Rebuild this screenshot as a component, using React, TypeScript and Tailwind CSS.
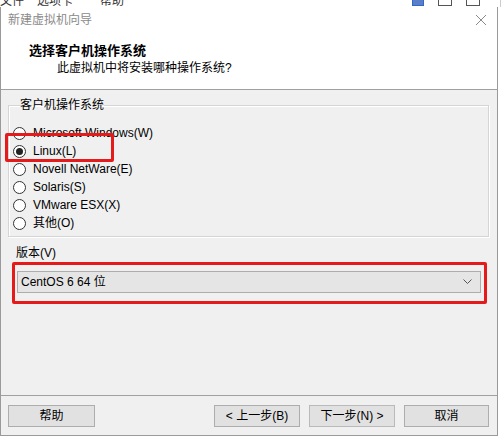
import React from "react";

const font = { fontFamily: '"Liberation Sans", "Noto Sans CJK SC", sans-serif' };

function Radio({ label, checked }: { label: string; checked?: boolean }) {
  return (
    <div className="flex items-center h-[18px]">
      <div className="w-[13px] h-[13px] rounded-full border border-[#333] bg-white flex items-center justify-center">
        {checked && <div className="w-[7px] h-[7px] rounded-full bg-[#222]" />}
      </div>
      <span className="ml-[7px] text-[12px] text-black leading-none">{label}</span>
    </div>
  );
}

function Btn({ label, w, className = "" }: { label: string; w: string; className?: string }) {
  return (
    <div
      className={`${w} h-[22px] bg-[#e1e1e1] border border-[#adadad] flex items-center justify-center text-[12px] text-black ${className}`}
    >
      {label}
    </div>
  );
}

export default function App() {
  return (
    <div className="w-[501px] h-[437px] bg-white overflow-hidden relative" style={font}>
      {/* background app strip */}
      <div className="h-[7px] overflow-hidden bg-white flex text-[12px] text-[#333] border-r border-[#ccc]">
        <div className="-mt-[8px] flex pl-[0px]">
          <span className="w-[37px]">文件</span>
          <span className="w-[63px]">选项卡</span>
          <span>帮助</span>
        </div>
        <div className="-mt-[8px] ml-auto mr-[20px] flex gap-[14px] items-start">
          <div className="w-[12px] h-[14px] border border-[#3366cc] bg-[#5b7fc7]" />
          <div className="w-[14px] h-[14px] border border-[#555]" />
          <div className="w-[14px] h-[14px] border border-[#555]" />
        </div>
      </div>

      {/* dialog */}
      <div className="w-[498px] h-[429px] border border-[#9a9a9a] border-t-0 flex flex-col bg-[#f0f0f0]">
        {/* title bar */}
        <div className="h-[28px] bg-white flex items-center pl-[7px] pr-[10px] shrink-0 pb-[3px]">
          <span className="text-[12px] text-[#8a8a8a]">新建虚拟机向导</span>
          <svg className="ml-auto" width="12" height="12" viewBox="0 0 12 12">
            <path d="M1 1L11 11M11 1L1 11" stroke="#8a8a8a" strokeWidth="1" />
          </svg>
        </div>
        {/* header */}
        <div className="h-[55px] bg-white border-b border-[#a0a0a0] shrink-0 pl-[28px] pt-[7px]">
          <div className="text-[13px] font-bold text-black leading-[17px]">选择客户机操作系统</div>
          <div className="text-[12px] text-black leading-[17px] ml-[28px] mt-[1px]">此虚拟机中将安装哪种操作系统?</div>
        </div>

        {/* body */}
        <div className="flex-1 relative flex flex-col">
          <fieldset className="ml-[7px] mr-[8px] mt-[9px] h-[138px] border border-[#d5d5d5] shadow-[inset_1px_1px_0_#fff,1px_1px_0_#fff] pl-[4px] pt-[13px]">
            <legend className="ml-[7px] px-0 text-[12px] text-black leading-none">客户机操作系统</legend>
            <div className="flex flex-col">
              <Radio label="Microsoft Windows(W)" />
              <Radio label="Linux(L)" checked />
              <Radio label="Novell NetWare(E)" />
              <Radio label="Solaris(S)" />
              <Radio label="VMware ESX(X)" />
              <Radio label="其他(O)" />
            </div>
          </fieldset>

          <div className="ml-[15px] mt-[10px] text-[12px] text-black leading-none">版本(V)</div>

          <div className="ml-[11px] mt-[3px] w-[475px] h-[42px] border-[3px] border-[#e51a1a] rounded-[2px] pl-[2px] pr-[3px] pt-[6px]">
            <div className="h-[22px] bg-[#e5e5e5] border border-[#adadad] flex items-center pl-[3px] pr-[8px]">
              <span className="text-[12px] text-black">CentOS 6 64 位</span>
              <svg className="ml-auto" width="9" height="6" viewBox="0 0 9 6">
                <path d="M0.5 0.5L4.5 4.5L8.5 0.5" stroke="#555" strokeWidth="1" fill="none" />
              </svg>
            </div>
          </div>

          {/* annotation around Linux */}
          <div className="absolute left-[4px] top-[43px] w-[109px] h-[29px] border-[3px] border-[#e51a1a] rounded-[2px]" />

          <div className="mt-auto border-t border-[#a0a0a0] h-[40px] flex items-start pt-[9px] pl-[7px]">
            <Btn label="帮助" w="w-[87px]" />
            <Btn label="< 上一步(B)" w="w-[86px]" className="ml-[119px]" />
            <Btn label="下一步(N) >" w="w-[86px]" className="ml-[9px] border-[#b9b9b9]" />
            <Btn label="取消" w="w-[85px]" className="ml-[9px]" />
          </div>
        </div>
      </div>
    </div>
  );
}
